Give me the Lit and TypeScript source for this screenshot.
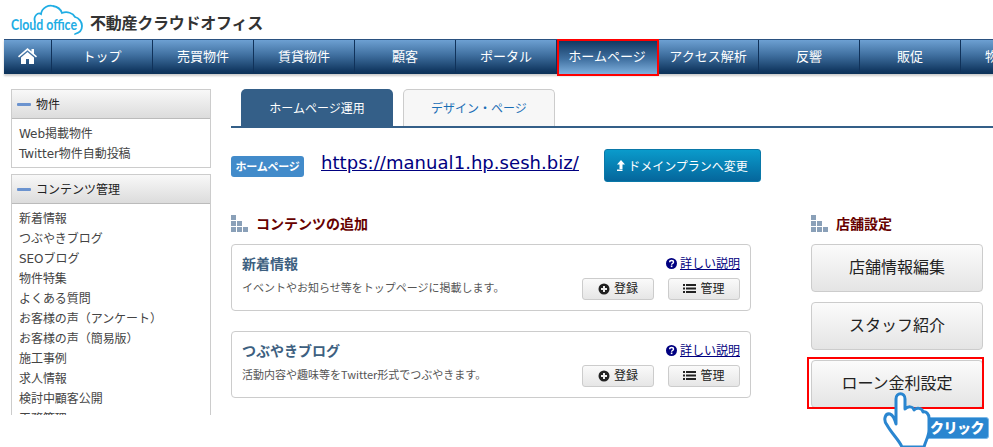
import { LitElement, html, css, svg } from "lit";
import { customElement } from "lit/decorators.js";

const NAV = ["トップ", "売買物件", "賃貸物件", "顧客", "ポータル", "ホームページ", "アクセス解析", "反響", "販促", "物件検索"];
const SIDE = [
  { title: "物件", items: ["Web掲載物件", "Twitter物件自動投稿"] },
  {
    title: "コンテンツ管理",
    items: ["新着情報", "つぶやきブログ", "SEOブログ", "物件特集", "よくある質問", "お客様の声（アンケート）", "お客様の声（簡易版）", "施工事例", "求人情報", "検討中顧客公開", "工務管理"],
  },
];
const CARDS = [
  { title: "新着情報", desc: "イベントやお知らせ等をトップページに掲載します。" },
  { title: "つぶやきブログ", desc: "活動内容や趣味等をTwitter形式でつぶやきます。" },
];

const blocks = svg`<svg class="blocks" width="17" height="17" viewBox="0 0 17 17" fill="#8aa0b8">
  <rect x="0" y="0" width="5" height="5"/><rect x="0" y="6" width="5" height="5"/><rect x="6" y="6" width="5" height="5"/>
  <rect x="0" y="12" width="5" height="5"/><rect x="6" y="12" width="5" height="5"/><rect x="12" y="12" width="5" height="5"/></svg>`;

const plus = svg`<svg width="12" height="12" viewBox="0 0 12 12"><circle cx="6" cy="6" r="5.5" fill="#222"/><path d="M6 3v6M3 6h6" stroke="#eee" stroke-width="2"/></svg>`;
const list = svg`<svg width="13" height="11" viewBox="0 0 13 11" fill="#222"><rect x="0" y="1" width="2" height="2"/><rect x="3" y="1" width="10" height="2"/><rect x="0" y="4.500" width="2" height="2"/><rect x="3" y="4.500" width="10" height="2"/><rect x="0" y="8" width="2" height="2"/><rect x="3" y="8" width="10" height="2"/></svg>`;
const question = svg`<svg width="11" height="11" viewBox="0 0 11 11"><circle cx="5.500" cy="5.500" r="5.500" fill="#000080"/><path d="M3.700 4.200c0-2.300 3.800-2.300 3.800 0 0 1.300-1.900 1.300-1.900 2.500" fill="none" stroke="#fff" stroke-width="1.400"/><rect x="4.800" y="7.500" width="1.600" height="1.600" fill="#fff"/></svg>`;
const upArrow = svg`<svg width="8" height="11" viewBox="0 0 8 11" fill="#fff"><path d="M4 0L8 4.500H5.500V9H2.500V4.500H0Z"/><rect x="0" y="9.500" width="5.500" height="1.500"/></svg>`;
const home = svg`<svg width="19" height="16" viewBox="0 0 19 16" fill="#fff"><path d="M9.500 0L13.500 3.500V1H16V5.700L19 8.300L18 9.500L9.500 2.300L1 9.500L0 8.300Z"/><path d="M3 9.500L9.500 4L16 9.500V16H11V11H8V16H3Z"/></svg>`;

@customElement("app-root")
export class AppRoot extends LitElement {
  static styles = css`
    :host {
      display: block;
      position: relative;
      width: 993px;
      height: 447px;
      overflow: hidden;
      background: #fff;
      font-family: "DejaVu Sans", "Noto Sans CJK JP", sans-serif;
      color: #333;
      font-size: 12px;
    }
    .head {
      height: 39px;
      display: flex;
      align-items: flex-start;
      padding-left: 11px;
      box-sizing: border-box;
    }
    .logo { display: block; width: 75px; height: 36px; margin-top: 3px; flex: none; }
    .logo-text {
      font: bold 14.500px/1 "Lato", "Noto Sans", sans-serif;
      fill: #1fade4;
    }
    .site {
      font: bold 16px/20px "Noto Sans CJK JP", sans-serif;
      color: #333;
      margin: 12px 0 0 4px;
      letter-spacing: -0.25px;
    }
    nav {
      display: flex;
      height: 35px;
      margin-left: 4px;
      width: 1100px;
      background: linear-gradient(#6da0d2 0%, #3f6f9f 45%, #10365f 92%, #0c3259 100%);
      border-top: 1px solid #2a5180;
      box-sizing: border-box;
      box-shadow: 0 2px 2px #ccc;
    }
    .cell {
      flex: none;
      width: 101px;
      box-sizing: border-box;
      border-right: 1px solid #10325a;
      padding-bottom: 2px;
      display: flex;
      align-items: center;
      justify-content: center;
      color: #fff;
      font: 13px/20px "Noto Sans CJK JP", sans-serif;
      position: relative;
    }
    .cell.home { width: 48px; padding-bottom: 3px; }
    .cell.active { background: linear-gradient(#10365f, #3f6f9f 55%, #7fb0de); }
    .cell.active::after {
      content: "";
      position: absolute;
      inset: -1px -2px -2px 0;
      border: 2px solid #f00;
    }
    main {
      display: flex;
      align-items: flex-start;
      padding: 15px 0 0 11px;
    }
    aside {
      flex: none;
      width: 200px;
      height: 326px;
      overflow: hidden;
      display: flex;
      flex-direction: column;
      gap: 6px;
    }
    .box { border: 1px solid #ccc; flex: none; box-sizing: border-box; }
    .box-h {
      height: 28px;
      display: flex;
      align-items: center;
      gap: 5px;
      padding-left: 5px;
      background: linear-gradient(#f8f8f8, #dcdcdc);
      border-bottom: 1px solid #bbb;
      font: 12px/16px "Noto Sans CJK JP", sans-serif;
      color: #222;
    }
    .dash { width: 14px; height: 3px; background: #6b93cf; border-radius: 1px; }
    .box-list { padding: 5px 7px 3px; }
    .box-list div { height: 20px; line-height: 20px; color: #444; letter-spacing: -0.05px; white-space: nowrap; }
    .content { flex: none; margin-left: 20px; width: 762px; }
    .tabs {
      display: flex;
      gap: 10px;
      padding-left: 10px;
      border-bottom: 2px solid #345f88;
      height: 37px;
    }
    .tab {
      width: 152px;
      box-sizing: border-box;
      display: flex;
      align-items: center;
      justify-content: center;
      font: 12px/16px "Noto Sans CJK JP", sans-serif;
      border-radius: 5px 5px 0 0;
    }
    .tab.on { background: #345f88; color: #fff; }
    .tab.off { border: 1px solid #ccc; border-bottom: 0; background: #f7f7f7; color: #1a6eb5; }
    .url-row { display: flex; align-items: flex-start; margin-top: 21px; height: 66px; }
    .badge {
      width: 73px;
      height: 21px;
      margin-top: 7px;
      background: #428bca;
      color: #fff;
      border-radius: 3px;
      font: bold 11px/20px "Noto Sans CJK JP", sans-serif;
      text-align: center;
      letter-spacing: -0.2px;
    }
    .url {
      margin-left: 17px;
      width: 283px;
      color: #000080;
      font: 18px/28px "DejaVu Sans", sans-serif;
      text-decoration: underline;
      flex: none;
      letter-spacing: 0.05px;
    }
    .plan {
      width: 157px;
      height: 33px;
      box-sizing: border-box;
      border-radius: 3px;
      border: 1px solid #0a78a8;
      background: linear-gradient(#0a9bcb, #05669c);
      color: #fff;
      font: 12px/31px "Noto Sans CJK JP", sans-serif;
      display: flex;
      align-items: center;
      justify-content: center;
      gap: 3px;
    }
    .cols { display: flex; gap: 60px; }
    .left { width: 520px; flex: none; }
    .right { width: 172px; flex: none; }
    .sec {
      display: flex;
      align-items: flex-start;
      height: 17px;
      margin-bottom: 12px;
      gap: 8px;
      font: bold 14px/17px "Noto Sans CJK JP", sans-serif;
      color: #660000;
    }
    .card {
      box-sizing: border-box;
      height: 67px;
      border: 1px solid #ccc;
      border-radius: 4px;
      margin-bottom: 20px;
      padding: 10px 10px 0;
      display: grid;
      grid-template-columns: 1fr auto;
      grid-template-rows: 20px 22px;
      row-gap: 3px;
    }
    .c-title { font: bold 14px/16px "Noto Sans CJK JP", sans-serif; color: #3d5f80; }
    .help { display: flex; align-items: flex-start; justify-content: flex-end; gap: 3px; font: 12px/16px "Noto Sans CJK JP", sans-serif; color: #000080; }
    .help svg { margin-top: 3px; }
    .help span { text-decoration: underline; }
    .c-desc { font: 11px/18px "Noto Sans CJK JP", sans-serif; color: #555; white-space: nowrap; }
    .acts { display: flex; gap: 14px; }
    .btn {
      width: 72px;
      height: 22px;
      box-sizing: border-box;
      border: 1px solid #ccc;
      border-radius: 3px;
      background: linear-gradient(#fafafa, #e6e6e6);
      display: flex;
      align-items: center;
      justify-content: center;
      gap: 4px;
      padding-bottom: 2px;
      font: 12px/18px "Noto Sans CJK JP", sans-serif;
      color: #222;
    }
    .btn svg { margin-top: 1px; }
    .stack { display: flex; flex-direction: column; gap: 10px; }
    .big {
      height: 48px;
      box-sizing: border-box;
      border: 1px solid #ccc;
      border-radius: 4px;
      background: linear-gradient(#fbfbfb, #e4e4e4);
      display: flex;
      align-items: center;
      justify-content: center;
      padding-bottom: 4px;
      font: 16px/22px "Noto Sans CJK JP", sans-serif;
      color: #222;
      position: relative;
    }
    .big.mark::after {
      content: "";
      position: absolute;
      inset: -4px -2px -2px -5px;
      border: 2px solid #f00;
    }
    .pointer { position: absolute; left: 882px; top: 388px; width: 111px; height: 59px; }
    .click {
      position: absolute;
      left: 924px;
      top: 417px;
      width: 65px;
      height: 22px;
      box-sizing: border-box;
      background: #2a86d0;
      border: 1px solid #7ab8e8;
      border-radius: 3px;
      color: #fff;
      font: 900 14px/19px "Noto Sans CJK JP", sans-serif;
      text-align: center;
      letter-spacing: -0.5px;
      padding-left: 1px;
    }
  `;

  render() {
    return html`
      <div class="head">
        <svg class="logo" viewBox="0 0 75 36">
          <path d="M24 19 C22 13 27 9 30 11 C31 4 38 2 42 3 C48 4 50 7 51 10 C56 8 62 10 64 14 C68 15 71 19 71 23 C71 27 68 30 64 31" fill="none" stroke="#1fade4" stroke-width="1.800" stroke-linecap="round"/>
          <text class="logo-text" x="0" y="27" textLength="66" lengthAdjust="spacingAndGlyphs">Cloud office</text>
        </svg>
        <div class="site">不動産クラウドオフィス</div>
      </div>
      <nav>
        <div class="cell home">${home}</div>
        ${NAV.map((n) => html`<div class="cell ${n === "ホームページ" ? "active" : ""}">${n}</div>`)}
      </nav>
      <main>
        <aside>
          ${SIDE.map(
            (b) => html`<div class="box">
              <div class="box-h"><span class="dash"></span>${b.title}</div>
              <div class="box-list">${b.items.map((i) => html`<div>${i}</div>`)}</div>
            </div>`
          )}
        </aside>
        <div class="content">
          <div class="tabs">
            <div class="tab on">ホームページ運用</div>
            <div class="tab off">デザイン・ページ</div>
          </div>
          <div class="url-row">
            <div class="badge">ホームページ</div>
            <div class="url">https://manual1.hp.sesh.biz/</div>
            <div class="plan">${upArrow}<span>ドメインプランへ変更</span></div>
          </div>
          <div class="cols">
            <div class="left">
              <div class="sec">${blocks}<span>コンテンツの追加</span></div>
              ${CARDS.map(
                (c) => html`<div class="card">
                  <div class="c-title">${c.title}</div>
                  <div class="help">${question}<span>詳しい説明</span></div>
                  <div class="c-desc">${c.desc}</div>
                  <div class="acts">
                    <div class="btn">${plus}登録</div>
                    <div class="btn">${list}管理</div>
                  </div>
                </div>`
              )}
            </div>
            <div class="right">
              <div class="sec">${blocks}<span>店舗設定</span></div>
              <div class="stack">
                <div class="big">店舗情報編集</div>
                <div class="big">スタッフ紹介</div>
                <div class="big mark">ローン金利設定</div>
              </div>
            </div>
          </div>
        </div>
      </main>
      <div class="click">クリック</div>
      <svg class="pointer" viewBox="882 388 111 59">
        <path d="M896 424 L896 399 C896 392 905 392 905 399 L905 409 C908 406 913 406 914 410 C917 407 922 408 923 412 C926 411 929 414 929 418 L929 430 C929 436 926 440 924 447 L902 447 C899 440 892 434 887 425 C883 420 885 413 890 414 C893 415 895 420 896 424 Z" fill="#fff" stroke="#2a86d0" stroke-width="3" stroke-linejoin="round"/>
      </svg>
    `;
  }
}
